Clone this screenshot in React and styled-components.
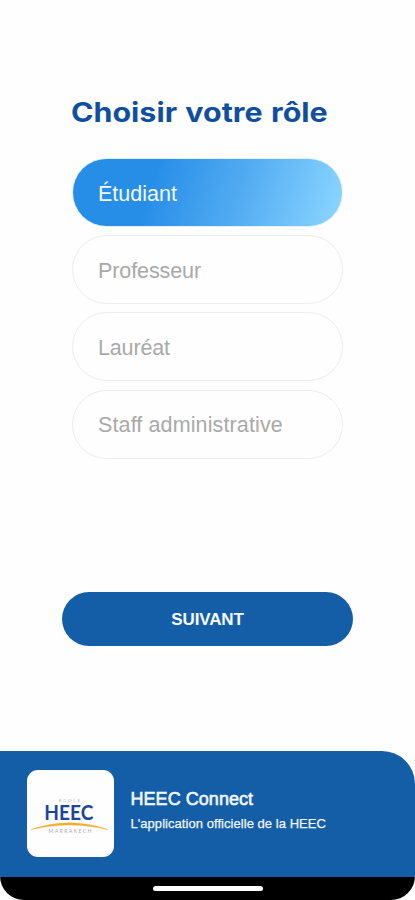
import React, { useState } from 'react';
import styled, { createGlobalStyle } from 'styled-components'

const GlobalStyle = createGlobalStyle`
    body {
        margin: 0;
        background: #fff;
    }
    * {
        box-sizing: border-box;
    }
`

const Screen = styled.main`
    width: 415px;
    height: 900px;
    display: flex;
    flex-direction: column;
    background: #fefefe;
    border-radius: 0 0 24px 24px;
    overflow: hidden;
    font-family: "Liberation Sans", Arial, sans-serif;
`

const Title = styled.h1`
    width: max-content;
    margin: 95px 0 0 70.5px;
    font-family: Inter, sans-serif;
    font-size: 26.5px;
    font-weight: 650;
    line-height: 34px;
    white-space: nowrap;
    word-spacing: 1px;
    color: #104f9f;
    transform: scaleX(1.148);
    transform-origin: left;
`

const Roles = styled.div`
    display: flex;
    flex-direction: column;
    gap: 8.2px;
    width: 271px;
    margin: 29px 0 0 72px;
`

const Role = styled.button`
    height: 69px;
    padding: 3px 0 0 25px;
    border: ${props => props.$selected ? '1px solid #e3f1fd' : '1.5px solid #ededee'};
    border-radius: 35px;
    background: ${props => props.$selected
        ? 'linear-gradient(107deg, #278ee8 0%, #278ee8 30%, #50aaf1 60%, #87d3ff 96%) border-box'
        : '#fefefe'};
    color: ${props => props.$selected ? '#f4faff' : '#a9a9aa'};
    font-family: inherit;
    font-size: 21.5px;
    letter-spacing: ${props => props.$spacing || 0}px;
    text-align: left;
`

const NextButton = styled.button`
    width: 291px;
    height: 54px;
    margin: 133px 0 0 62px;
    padding: 2px 0 0;
    border: 0;
    border-radius: 27px;
    background: #145ea8;
    color: #f8fafe;
    font-family: inherit;
    font-size: 17px;
    font-weight: 700;
    letter-spacing: -0.15px;
`

const Footer = styled.footer`
    display: flex;
    align-items: flex-start;
    height: 126px;
    margin-top: auto;
    padding: 19px 0 0 26.5px;
    border-top-right-radius: 33px;
    background: #145ea8;
`

const LogoCard = styled.div`
    width: 87px;
    height: 87px;
    border-radius: 11px;
    background: #fefefe;
`

const AppInfo = styled.div`
    padding: 18px 0 0 17px;
    color: #f2f6fd;
    white-space: nowrap;
`

const AppName = styled.div`
    font-size: 18px;
    line-height: 22px;
    letter-spacing: 0.05px;
    -webkit-text-stroke: 0.6px currentColor;
`

const AppTagline = styled.div`
    margin-top: 6px;
    font-size: 13px;
    line-height: 15px;
    letter-spacing: 0.05px;
    -webkit-text-stroke: 0.25px currentColor;
`

const HomeBar = styled.div`
    display: flex;
    justify-content: center;
    height: 23px;
    padding-top: 9px;
    background: #000;
    border-radius: 0 0 20px 20px;
`

const HomeIndicator = styled.div`
    width: 110px;
    height: 5px;
    border-radius: 3px;
    background: #fff;
`

const Logo = () => (
    <svg width="87" height="87" viewBox="0 0 87 87">
        <text x="32" y="32" fontFamily="Lato, sans-serif" fontSize="4.4" fill="#a6adbf" textLength="21">ECOLE</text>
        <text x="17.3" y="49.5" fontFamily="Lato, sans-serif" fontSize="21" fontWeight="700" fill="#1b459b" textLength="49" lengthAdjust="spacingAndGlyphs">HEEC</text>
        <path d="M4 59.5 Q42 46 81 59.5 Q42 50.5 4 59.5 Z" fill="#f0ad2e" stroke="#f0ad2e" strokeWidth="0.4" />
        <text x="21.5" y="63" fontFamily="Lato, sans-serif" fontSize="5.2" fill="#a6adbf" textLength="43">MARRAKECH</text>
    </svg>
)

const roles = [
    { name: 'Étudiant' },
    { name: 'Professeur', spacing: -0.1 },
    { name: 'Lauréat', spacing: -0.15 },
    { name: 'Staff administrative', spacing: 0.12 },
]

function App() {
    const [selected, setSelected] = useState('Étudiant')

    return (
        <>
            <GlobalStyle />
            <Screen>
                <Title>Choisir votre rôle</Title>
                <Roles>
                    {roles.map(role => (
                        <Role
                            key={role.name}
                            $selected={role.name === selected}
                            $spacing={role.spacing}
                            onClick={() => setSelected(role.name)}
                        >
                            {role.name}
                        </Role>
                    ))}
                </Roles>
                <NextButton>SUIVANT</NextButton>
                <Footer>
                    <LogoCard>
                        <Logo />
                    </LogoCard>
                    <AppInfo>
                        <AppName>HEEC Connect</AppName>
                        <AppTagline>L'application officielle de la HEEC</AppTagline>
                    </AppInfo>
                </Footer>
                <HomeBar>
                    <HomeIndicator />
                </HomeBar>
            </Screen>
        </>
    )
}

export default App;
